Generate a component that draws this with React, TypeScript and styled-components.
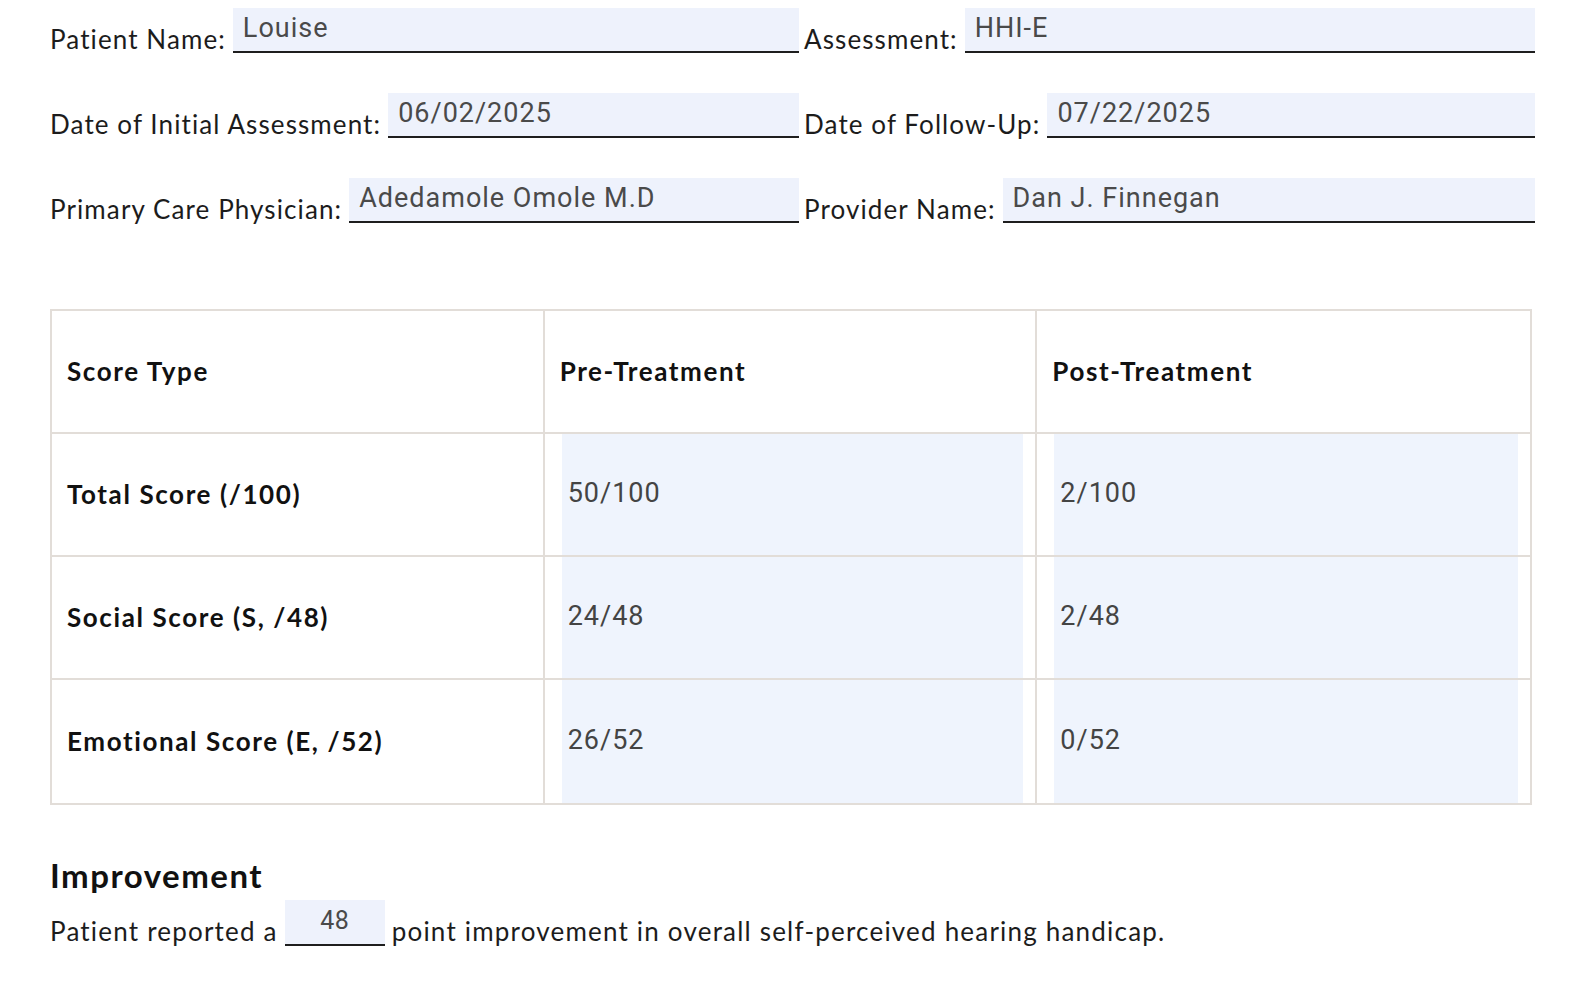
import React from 'react';
import styled, { createGlobalStyle } from 'styled-components';

const GlobalStyle = createGlobalStyle`
  html, body {
    margin: 0;
    padding: 0;
    background: #ffffff;
    overflow: hidden;
  }
  body {
    font-family: Lato, 'Open Sans', sans-serif;
    color: #1c1c1c;
  }
`;

interface FieldProps {
  label: string;
  value: string;
}

const headerFields: [FieldProps, FieldProps][] = [
  [
    { label: 'Patient Name:', value: 'Louise' },
    { label: 'Assessment:', value: 'HHI-E' },
  ],
  [
    { label: 'Date of Initial Assessment:', value: '06/02/2025' },
    { label: 'Date of Follow-Up:', value: '07/22/2025' },
  ],
  [
    { label: 'Primary Care Physician:', value: 'Adedamole Omole M.D' },
    { label: 'Provider Name:', value: 'Dan J. Finnegan' },
  ],
];

const scores = [
  { type: 'Total Score (/100)', pre: '50/100', post: '2/100' },
  { type: 'Social Score (S, /48)', pre: '24/48', post: '2/48' },
  { type: 'Emotional Score (E, /52)', pre: '26/52', post: '0/52' },
];

const Field: React.FC<FieldProps> = ({ label, value }) => (
  <FieldGroup>
    <Label>{label}</Label>
    <Input>{value}</Input>
  </FieldGroup>
);

const App: React.FC = () => {
  return (
    <>
      <GlobalStyle />
      <Page>
        <InfoGrid>
          {headerFields.map(([left, right]) => (
            <React.Fragment key={left.label}>
              <Field {...left} />
              <Field {...right} />
            </React.Fragment>
          ))}
        </InfoGrid>

        <ScoreTable>
          <HeadCell>Score Type</HeadCell>
          <HeadCell>Pre-Treatment</HeadCell>
          <HeadCell $last>Post-Treatment</HeadCell>
          {scores.map((row, i) => {
            const bottom = i === scores.length - 1;
            return (
              <React.Fragment key={row.type}>
                <HeadCell $bottom={bottom}>{row.type}</HeadCell>
                <ValueCell $bottom={bottom}>
                  <ValueBox>{row.pre}</ValueBox>
                </ValueCell>
                <ValueCell $bottom={bottom} $last>
                  <ValueBox>{row.post}</ValueBox>
                </ValueCell>
              </React.Fragment>
            );
          })}
        </ScoreTable>

        <Improvement>
          <Heading>Improvement</Heading>
          <Sentence>
            <span>Patient reported a</span>
            <InlineInput>48</InlineInput>
            <span>point improvement in overall self-perceived hearing handicap.</span>
          </Sentence>
        </Improvement>
      </Page>
    </>
  );
};

export default App;

const Page = styled.div`
  padding: 8px 0 0 50px;
  width: 1490px;
`;

const InfoGrid = styled.div`
  display: grid;
  grid-template-columns: 749px 731px;
  column-gap: 5px;
  row-gap: 40px;
`;

const FieldGroup = styled.div`
  display: flex;
  align-items: flex-end;
  gap: 7px;
`;

const Label = styled.span`
  font-size: 26px;
  letter-spacing: 1.1px;
  white-space: nowrap;
  line-height: 1;
  padding-bottom: 1px;
  color: #1c1c1c;
`;

const Input = styled.div`
  flex: 1;
  height: 36px;
  background: #eef2fc;
  border-bottom: 2px solid #1e1e1e;
  font-family: Roboto, 'Liberation Sans', sans-serif;
  font-size: 27px;
  letter-spacing: 1px;
  color: #4a4a4a;
  padding: 7px 0 0 10px;
  box-sizing: content-box;
  line-height: 1;
`;

const ScoreTable = styled.div`
  margin-top: 86px;
  width: 1482px;
  display: grid;
  grid-template-columns: repeat(3, 1fr);
  grid-auto-rows: 123px;
  border: 2px solid #e2ddd8;
  box-sizing: border-box;
`;

const HeadCell = styled.div<{ $last?: boolean; $bottom?: boolean }>`
  display: flex;
  align-items: center;
  padding-left: 15px;
  padding-bottom: 2px;
  font-size: 26px;
  font-weight: 700;
  letter-spacing: 1.6px;
  color: #111;
  border-right: ${(p) => (p.$last ? 'none' : '2px solid #e2ddd8')};
  border-bottom: ${(p) => (p.$bottom ? 'none' : '2px solid #e2ddd8')};
`;

const ValueCell = styled.div<{ $last?: boolean; $bottom?: boolean }>`
  display: flex;
  padding: 0 12px 0 17px;
  border-right: ${(p) => (p.$last ? 'none' : '2px solid #e2ddd8')};
  border-bottom: ${(p) => (p.$bottom ? 'none' : '2px solid #e2ddd8')};
`;

const ValueBox = styled.div`
  flex: 1;
  display: flex;
  align-items: center;
  padding-left: 6px;
  padding-bottom: 4px;
  background: #eff4fd;
  font-family: Roboto, 'Liberation Sans', sans-serif;
  font-size: 27px;
  letter-spacing: 1px;
  color: #444;
`;

const Improvement = styled.div`
  margin-top: 50px;
  display: flex;
  flex-direction: column;
  gap: 5px;
`;

const Heading = styled.h2`
  margin: 0;
  font-size: 33px;
  font-weight: 700;
  letter-spacing: 1.5px;
  color: #111;
`;

const Sentence = styled.div`
  display: flex;
  align-items: flex-end;
  gap: 7px;
  font-size: 26px;
  letter-spacing: 1.2px;
  line-height: 1;
  color: #1c1c1c;

  & > span {
    padding-bottom: 2px;
  }
`;

const InlineInput = styled.div`
  width: 100px;
  height: 46px;
  background: #eef2fc;
  border-bottom: 2px solid #1e1e1e;
  font-family: Roboto, 'Liberation Sans', sans-serif;
  font-size: 25px;
  color: #4a4a4a;
  text-align: center;
  padding-top: 8px;
  box-sizing: border-box;
  letter-spacing: 0.5px;
`;
